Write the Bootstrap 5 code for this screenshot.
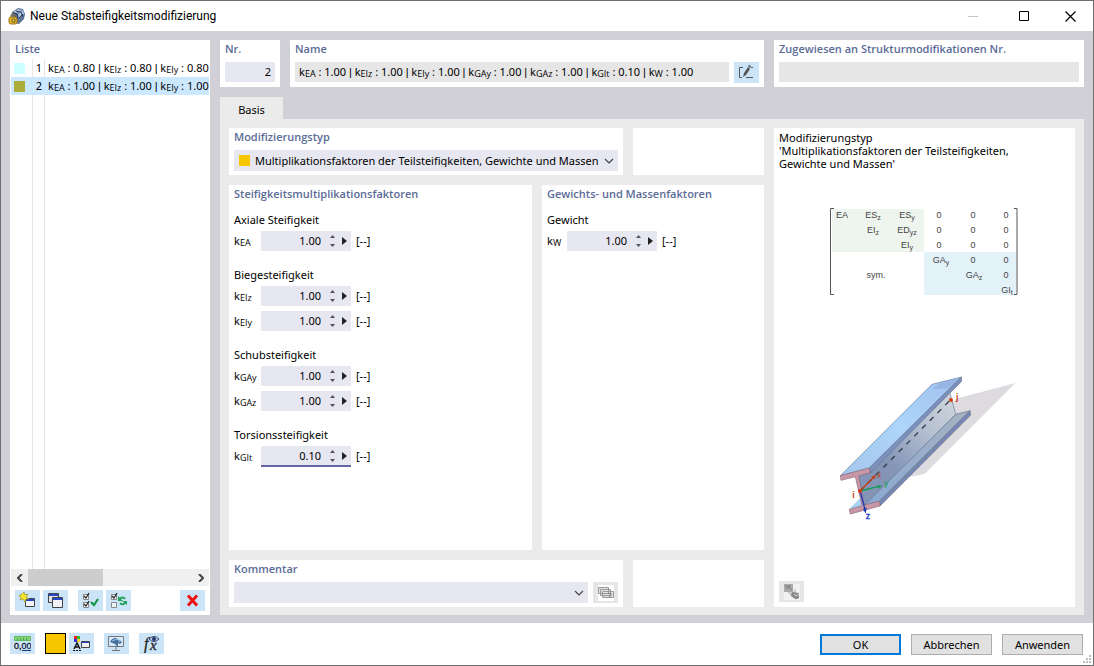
<!DOCTYPE html>
<html lang="de">
<head>
<meta charset="utf-8">
<meta name="viewport" content="width=device-width, initial-scale=1">
<title>Neue Stabsteifigkeitsmodifizierung</title>
<link href="https://cdn.jsdelivr.net/npm/bootstrap@5.3.0/dist/css/bootstrap.min.css" rel="stylesheet">
<style>
  body { font: 11px/13px "Noto Sans", "Open Sans", sans-serif; color: #000; background: #fff; border: 1px solid #707070; }
  button, input, select { font: inherit; color: inherit; border: 0; border-radius: 0; padding: 0; }
  svg { display: block; }
  .title-bar { height: 30px; padding-left: 7px; gap: 5px; }
  .title-bar h1 { font: 12px/16px Roboto, "Open Sans", sans-serif; }
  .win-btn { width: 46px; height: 30px; background: none; }
  .workspace { background: #d1d0d6; padding: 9px 9px 8px; gap: 10px; }
  .cells { gap: 10px; }
  .inline-cells { gap: 5px; }
  .pane { background: #fff; padding: 0 5px 4px; min-width: 0; }
  .pane-title { font: 600 11px/18px "Open Sans", "Noto Sans", sans-serif; height: 22px; color: #5b6b97; margin: 0; white-space: nowrap; }
  .list-pane { width: 200px; padding: 0 1px 4px; }
  .list-pane .pane-title { height: 19px; padding-left: 4px; }
  .entries { border-collapse: separate; border-spacing: 0; table-layout: fixed; width: 198px; }
  .entries td { height: 18px; padding: 0; white-space: nowrap; line-height: 18px; }
  .entries td + td { border-left: 1px solid #e6e6e6; }
  .entries td:nth-child(1) { width: 21px; padding-left: 3px; }
  .entries td:nth-child(2) { width: 12px; text-align: right; padding-right: 2px; }
  .entries td:nth-child(3) { padding-left: 3px; }
  .entries .chosen td { background: #cce8ff; border-color: #cce8ff; }
  .entries .filler td { height: auto; }
  .swatch { width: 11px; height: 11px; flex: none; }
  .sub { font: 9px/9px "Open Sans", sans-serif; position: relative; top: 1px; }
  .bar { font-family: "Liberation Sans", Arial, sans-serif; }
  .h-scroll { height: 17px; background: #f0f0f0; }
  .h-scroll button { width: 17px; background: none; }
  .thumb { width: 75px; background: #cdcdcd; }
  .list-tools { padding: 4px 4px 0; gap: 3px; }
  .tool { width: 25px; height: 21px; background: #cce4f7; display: flex; align-items: center; justify-content: center; flex: none; }
  .tool:disabled { background: #e6e6e6; }
  .gap-after { margin-right: 7px; }
  .field { height: 20px; background: #e7e7f1; min-width: 0; width: 100%; padding: 0 4px; line-height: 20px; white-space: nowrap; }
  .field.locked { background: #e6e6e6; }
  .combo { background: #e7e7f1; height: 21px; }
  .combo .swatch { margin-left: 5px; }
  .combo select { appearance: none; background: none; width: 100%; height: 21px; padding: 0 14px 0 5px; min-width: 0; }
  .combo .chevron { width: 14px; margin-left: -14px; pointer-events: none; flex: none; }
  .nr-pane { width: 60px; }
  .assign-pane { width: 310px; }
  .tab-basis { width: 63px; height: 22px; background: #ebebeb; text-align: center; margin-top: 10px; line-height: 26px; }
  .tab-page { background: #ebebeb; padding: 9px 9px 8px; }
  .side-pane { width: 131px; }
  .weight-pane { width: 222px; }
  .preview-pane { width: 301px; padding: 3px 5px 5px; }
  .preview-pane p { width: 250px; margin: 0 0 38px; }
  .beam { margin-top: 64px; }
  .group { border: 0; padding: 0; margin: 0 0 8px; min-width: 0; }
  .group legend { font-size: 11px; line-height: 22px; height: 22px; margin: 0; float: none; }
  .pane-title + .group { margin-top: 2px; }
  .factor { height: 20px; margin-bottom: 5px; line-height: 20px; }
  .factor label { width: 27px; }
  .weight-pane .factor label { width: 20px; }
  .spin { width: 90px; height: 20px; background: #e7e7f1; margin-right: 5px; }
  .spin input { width: 60px; text-align: right; background: none; height: 20px; }
  .spin.active { height: 21px; box-shadow: inset 0 -2px #6464a5; }
  .stepper { width: 11px; margin-left: 6px; padding-top: 1px; }
  .stepper button, .more { background: none; display: flex; align-items: center; justify-content: center; }
  .stepper button { height: 9px; width: 11px; }
  .more { width: 12px; height: 20px; }
  .footer-bar { padding: 10px 10px 10px 9px; gap: 10px; }
  .colour-btn { width: 21px; height: 21px; background: #f7c600; border: 1px solid #000; margin-right: -7px; }
  .dlg-btn { width: 81px; height: 21px; background: #e1e1e1; border: 1px solid #adadad; margin-top: 1px; line-height: 19px; }
  .dlg-btn.primary { border: 2px solid #0078d7; line-height: 17px; }
  .grip { position: absolute; right: 2px; bottom: 2px; }
</style>
</head>
<body class="d-flex flex-column min-vh-100 position-relative">
<svg width="0" height="0" class="position-absolute" aria-hidden="true">
  <symbol id="up" viewBox="0 0 5 3"><path d="M0 3 2.500 0 5 3z" fill="#555"/></symbol>
  <symbol id="down" viewBox="0 0 5 3"><path d="M0 0 2.500 3 5 0z" fill="#555"/></symbol>
  <symbol id="right" viewBox="0 0 5 8"><path d="M0 0 5 4 0 8z" fill="#222"/></symbol>
  <symbol id="chev" viewBox="0 0 10 6"><path d="M1 1 5 5 9 1" fill="none" stroke="#444" stroke-width="1.200"/></symbol>
</svg>

<header class="title-bar d-flex align-items-center">
  <svg width="17" height="17" viewBox="0 0 17 17" aria-hidden="true">
    <path d="M4 4 10 0l5 1 2 5-1 5-5 5-6-1-2-5z" fill="#5f7598"/>
    <path d="M5 4l5-3 4 1-5 3zM10 6l5-4 1 4-5 4z" fill="#b3c5dc"/>
    <path d="M5 5l4 1 1 5M8 3l5 1 2 5M11 10l4-4" fill="none" stroke="#263d61"/>
    <rect x="1" y="9" width="8" height="7" rx="2" fill="#e3b72c" stroke="#9a7415"/>
    <path d="M3 9V7q2-3 4 0v2M4 11h3v3H4z" fill="none" stroke="#7f662b"/>
  </svg>
  <h1 class="m-0 flex-grow-1">Neue Stabsteifigkeitsmodifizierung</h1>
  <button class="win-btn d-flex align-items-center justify-content-center me-n1" disabled aria-label="Minimieren"><svg width="10" height="1"><path d="M0 .5h10" stroke="#c4c4c4"/></svg></button>
  <div class="d-flex">
    <button class="win-btn d-flex align-items-center justify-content-center" aria-label="Maximieren"><svg width="10" height="10"><path d="M.5.5h9v9h-9z" fill="none" stroke="#000"/></svg></button>
    <button class="win-btn d-flex align-items-center justify-content-center" aria-label="Schließen"><svg width="11" height="11"><path d="M.5.5l10 10M10.500.5l-10 10" stroke="#000" stroke-width="1.200"/></svg></button>
  </div>
</header>

<main class="workspace d-flex flex-grow-1">
  <section class="pane list-pane d-flex flex-column flex-shrink-0">
    <h2 class="pane-title">Liste</h2>
    <div class="flex-grow-1 d-flex overflow-hidden">
      <table class="entries">
        <tbody>
          <tr><td><div class="swatch" style="background:#ccffff"></div></td><td>1</td><td>k<span class="sub">EA</span> : 0.80 <span class="bar">|</span> k<span class="sub">EIz</span> : 0.80 <span class="bar">|</span> k<span class="sub">EIy</span> : 0.80</td></tr>
          <tr class="chosen"><td><div class="swatch" style="background:#abac3b"></div></td><td>2</td><td>k<span class="sub">EA</span> : 1.00 <span class="bar">|</span> k<span class="sub">EIz</span> : 1.00 <span class="bar">|</span> k<span class="sub">EIy</span> : 1.00</td></tr>
          <tr class="filler"><td></td><td></td><td></td></tr>
        </tbody>
      </table>
    </div>
    <div class="h-scroll d-flex">
      <button class="d-flex align-items-center justify-content-center" aria-label="Nach links"><svg width="6" height="8"><path d="M5 0 1 4l4 4" fill="none" stroke="#444" stroke-width="2"/></svg></button>
      <div class="thumb"></div>
      <button class="ms-auto d-flex align-items-center justify-content-center" aria-label="Nach rechts"><svg width="6" height="8"><path d="M1 0 5 4 1 8" fill="none" stroke="#444" stroke-width="2"/></svg></button>
    </div>
    <div class="list-tools d-flex">
      <button class="tool" aria-label="Neu"><svg width="17" height="17">
        <path d="M6.500 6.500h9v8h-9z" fill="#f4f4f8" stroke="#444"/><path d="M7 7h8v2H7z" fill="#2648c8"/>
        <path d="M5 0l1 3 3-1-2 3 3 2-3 0-1 3-2-3-3 1 1-3-3-2 3 0z" fill="#f7e52a" stroke="#8d8420" stroke-width=".6"/></svg></button>
      <button class="tool gap-after" aria-label="Kopieren"><svg width="17" height="17">
        <path d="M1.500 1.500h10v9h-10z" fill="#e3e3e8" stroke="#444"/><path d="M2 2h9v2H2z" fill="#2648c8"/>
        <path d="M5.500 5.500h10v10h-10z" fill="#f4f4f8" stroke="#444"/><path d="M6 6h9v2H6z" fill="#2648c8"/></svg></button>
      <button class="tool" aria-label="Alle auswählen"><svg width="17" height="17">
        <path d="M1.500 2.500h5v5h-5zM1.500 10.500h5v5h-5z" fill="#fff" stroke="#888"/>
        <path d="M2 4l2 2 3-5M2 12l2 2 3-5" fill="none" stroke="#222" stroke-width="1.200"/>
        <path d="M9 10l3 3 4-6" fill="none" stroke="#149548" stroke-width="2.200"/></svg></button>
      <button class="tool" aria-label="Auswahl umkehren"><svg width="17" height="17">
        <path d="M1.500 2.500h5v5h-5zM1.500 10.500h5v5h-5z" fill="#eef4f8" stroke="#888"/>
        <path d="M2 4l2 2 3-5" fill="none" stroke="#222" stroke-width="1.200"/>
        <path d="M9 7q4-3 6 0M16 10q-3 4-6 1" fill="none" stroke="#23a45a" stroke-width="1.800"/><path d="M8 4v5h5zM17 13V9h-5z" fill="#23a45a"/></svg></button>
      <button class="tool ms-auto" aria-label="Löschen"><svg width="13" height="13"><path d="M2 1.500l9 10M11 1.500l-9 10" stroke="#ee1111" stroke-width="3"/></svg></button>
    </div>
  </section>

  <div class="d-flex flex-column flex-grow-1">
    <div class="cells d-flex">
      <section class="pane nr-pane flex-shrink-0">
        <label class="pane-title d-block" for="nr">Nr.</label>
        <input class="field text-end" id="nr" value="2">
      </section>
      <section class="pane flex-grow-1">
        <h2 class="pane-title" id="name-title">Name</h2>
        <div class="inline-cells d-flex">
          <div class="field locked flex-grow-1 overflow-hidden" role="textbox" aria-readonly="true" aria-labelledby="name-title">k<span class="sub">EA</span> : 1.00 <span class="bar">|</span> k<span class="sub">EIz</span> : 1.00 <span class="bar">|</span> k<span class="sub">EIy</span> : 1.00 <span class="bar">|</span> k<span class="sub">GAy</span> : 1.00 <span class="bar">|</span> k<span class="sub">GAz</span> : 1.00 <span class="bar">|</span> k<span class="sub">GIt</span> : 0.10 <span class="bar">|</span> k<span class="sub">W</span> : 1.00</div>
          <button class="tool" aria-label="Name bearbeiten"><svg width="17" height="15">
            <path d="M5 2.500H1.500v10H4M13 2.500h2M8 12.500h7" fill="none" stroke="#555"/>
            <path d="M5 12l1-4 4-6 2 2-4 6z" fill="#555"/><path d="M10 1l1-1 2 1-1 2z" fill="#555"/></svg></button>
        </div>
      </section>
      <section class="pane assign-pane flex-shrink-0">
        <label class="pane-title d-block" for="assigned">Zugewiesen an Strukturmodifikationen Nr.</label>
        <input class="field locked" id="assigned" readonly>
      </section>
    </div>

    <div role="tablist" class="d-flex"><button class="tab-basis" role="tab" aria-selected="true">Basis</button></div>
    <div class="tab-page cells d-flex flex-grow-1" role="tabpanel">
      <div class="cells d-flex flex-column flex-grow-1">
        <div class="cells d-flex">
          <section class="pane flex-grow-1">
            <label class="pane-title d-block" for="modtype">Modifizierungstyp</label>
            <div class="combo d-flex align-items-center">
              <span class="swatch" style="background:#f7c600"></span>
              <select id="modtype"><option>Multiplikationsfaktoren der Teilsteifigkeiten, Gewichte und Massen</option></select>
              <span class="chevron"><svg width="10" height="6"><use href="#chev"/></svg></span>
            </div>
          </section>
          <section class="pane side-pane flex-shrink-0"></section>
        </div>

        <div class="cells d-flex flex-grow-1">
          <section class="pane flex-grow-1">
            <h2 class="pane-title">Steifigkeitsmultiplikationsfaktoren</h2>
            <fieldset class="group"><legend>Axiale Steifigkeit</legend>
              <div class="factor d-flex"><label for="kea">k<span class="sub">EA</span></label><div class="spin d-flex"><input id="kea" value="1.00"><span class="stepper"><button aria-label="Erhöhen"><svg width="5" height="3"><use href="#up"/></svg></button><button aria-label="Verringern"><svg width="5" height="3"><use href="#down"/></svg></button></span><button class="more" aria-label="Mehr"><svg width="5" height="8"><use href="#right"/></svg></button></div><span>[--]</span></div>
            </fieldset>
            <fieldset class="group"><legend>Biegesteifigkeit</legend>
              <div class="factor d-flex"><label for="keiz">k<span class="sub">EIz</span></label><div class="spin d-flex"><input id="keiz" value="1.00"><span class="stepper"><button aria-label="Erhöhen"><svg width="5" height="3"><use href="#up"/></svg></button><button aria-label="Verringern"><svg width="5" height="3"><use href="#down"/></svg></button></span><button class="more" aria-label="Mehr"><svg width="5" height="8"><use href="#right"/></svg></button></div><span>[--]</span></div>
              <div class="factor d-flex"><label for="keiy">k<span class="sub">EIy</span></label><div class="spin d-flex"><input id="keiy" value="1.00"><span class="stepper"><button aria-label="Erhöhen"><svg width="5" height="3"><use href="#up"/></svg></button><button aria-label="Verringern"><svg width="5" height="3"><use href="#down"/></svg></button></span><button class="more" aria-label="Mehr"><svg width="5" height="8"><use href="#right"/></svg></button></div><span>[--]</span></div>
            </fieldset>
            <fieldset class="group"><legend>Schubsteifigkeit</legend>
              <div class="factor d-flex"><label for="kgay">k<span class="sub">GAy</span></label><div class="spin d-flex"><input id="kgay" value="1.00"><span class="stepper"><button aria-label="Erhöhen"><svg width="5" height="3"><use href="#up"/></svg></button><button aria-label="Verringern"><svg width="5" height="3"><use href="#down"/></svg></button></span><button class="more" aria-label="Mehr"><svg width="5" height="8"><use href="#right"/></svg></button></div><span>[--]</span></div>
              <div class="factor d-flex"><label for="kgaz">k<span class="sub">GAz</span></label><div class="spin d-flex"><input id="kgaz" value="1.00"><span class="stepper"><button aria-label="Erhöhen"><svg width="5" height="3"><use href="#up"/></svg></button><button aria-label="Verringern"><svg width="5" height="3"><use href="#down"/></svg></button></span><button class="more" aria-label="Mehr"><svg width="5" height="8"><use href="#right"/></svg></button></div><span>[--]</span></div>
            </fieldset>
            <fieldset class="group"><legend>Torsionssteifigkeit</legend>
              <div class="factor d-flex"><label for="kgit">k<span class="sub">GIt</span></label><div class="spin active d-flex"><input id="kgit" value="0.10"><span class="stepper"><button aria-label="Erhöhen"><svg width="5" height="3"><use href="#up"/></svg></button><button aria-label="Verringern"><svg width="5" height="3"><use href="#down"/></svg></button></span><button class="more" aria-label="Mehr"><svg width="5" height="8"><use href="#right"/></svg></button></div><span>[--]</span></div>
            </fieldset>
          </section>
          <section class="pane weight-pane flex-shrink-0">
            <h2 class="pane-title">Gewichts- und Massenfaktoren</h2>
            <fieldset class="group"><legend>Gewicht</legend>
              <div class="factor d-flex"><label for="kw">k<span class="sub">W</span></label><div class="spin d-flex"><input id="kw" value="1.00"><span class="stepper"><button aria-label="Erhöhen"><svg width="5" height="3"><use href="#up"/></svg></button><button aria-label="Verringern"><svg width="5" height="3"><use href="#down"/></svg></button></span><button class="more" aria-label="Mehr"><svg width="5" height="8"><use href="#right"/></svg></button></div><span>[--]</span></div>
            </fieldset>
          </section>
        </div>

        <div class="cells d-flex">
          <section class="pane flex-grow-1">
            <label class="pane-title d-block" for="comment">Kommentar</label>
            <div class="inline-cells d-flex">
              <div class="combo d-flex align-items-center flex-grow-1">
                <select id="comment"><option></option></select>
                <span class="chevron"><svg width="10" height="6"><use href="#chev"/></svg></span>
              </div>
              <button class="tool" disabled aria-label="Kommentare"><svg width="16" height="16">
                <path d="M0 0h16v16H0z" fill="#fff"/><g fill="#e2e2e2" stroke="#999"><path d="M.5 2.500h10v6H.5zM2.500 4.500h10v6h-10zM4.500 6.500h11v6h-11z"/></g><path d="M10 8.500h3v2l-2 1.500" fill="none" stroke="#777"/></svg></button>
            </div>
          </section>
          <section class="pane side-pane flex-shrink-0"></section>
        </div>
      </div>

      <section class="pane preview-pane flex-shrink-0 d-flex flex-column">
        <p>Modifizierungstyp<br>'Multiplikationsfaktoren der Teilsteifigkeiten, Gewichte und Massen'</p>
        <svg class="align-self-center" width="190" height="88" viewBox="0 0 190 88" font-family="Liberation Sans, Arial, sans-serif" font-size="9" fill="#444" text-anchor="middle" role="img" aria-label="Steifigkeitsmatrix">
          <path d="M2 1h92v43H2z" fill="#eef5ee"/><path d="M94 44h92v43H94z" fill="#e3f2f9"/>
          <path d="M4 .5H.5v86H4M184 .5h3v86h-3" fill="none" stroke="#555"/>
          <text x="12" y="10">EA</text><text x="43" y="10">ES<tspan font-size="7" dy="2">z</tspan></text><text x="77" y="10">ES<tspan font-size="7" dy="2">y</tspan></text>
          <text x="109" y="10">0</text><text x="143" y="10">0</text><text x="176" y="10">0</text>
          <text x="43" y="25">EI<tspan font-size="7" dy="2">z</tspan></text><text x="77" y="25">ED<tspan font-size="7" dy="2">yz</tspan></text>
          <text x="109" y="25">0</text><text x="143" y="25">0</text><text x="176" y="25">0</text>
          <text x="77" y="40">EI<tspan font-size="7" dy="2">y</tspan></text>
          <text x="109" y="40">0</text><text x="143" y="40">0</text><text x="176" y="40">0</text>
          <text x="111" y="55">GA<tspan font-size="7" dy="2">y</tspan></text><text x="143" y="55">0</text><text x="176" y="55">0</text>
          <text x="46" y="70">sym.</text><text x="144" y="70">GA<tspan font-size="7" dy="2">z</tspan></text><text x="176" y="70">0</text>
          <text x="177" y="85">GI<tspan font-size="7" dy="2">t</tspan></text>
        </svg>
        <svg class="beam align-self-center" width="210" height="170" viewBox="0 0 630 510" role="img" aria-label="Stab mit lokalen Achsen">
          <defs>
            <linearGradient id="flange" x1="0" y1="1" x2="1" y2="0"><stop offset="0" stop-color="#a5c6ea"/><stop offset=".5" stop-color="#aed5fa"/><stop offset="1" stop-color="#9fc0ee"/></linearGradient>
            <linearGradient id="web" x1="1" y1="0" x2=".35" y2=".65"><stop offset="0" stop-color="#d3d8de"/><stop offset=".5" stop-color="#b4bfd0"/><stop offset="1" stop-color="#8394b7"/></linearGradient>
            <linearGradient id="low" x1="0" y1="1" x2="1" y2="0"><stop offset="0" stop-color="#8aa9d2"/><stop offset="1" stop-color="#a6b2c0"/></linearGradient>
          </defs>
          <path d="M408 116 586 69 315 341 170 372z" fill="#dddbe0"/>
          <path d="M110 348 148 335 388 92 407 163 133 437z" fill="url(#web)" stroke="#6b7a98" stroke-width="2"/>
          <path d="M133 436 407 163 450 152 178 424z" fill="url(#low)" stroke="#66738c" stroke-width="2"/>
          <path d="M178 424 450 152 452 165 180 438z" fill="#7687b2" stroke="#66738c" stroke-width="2"/>
          <path d="M88 446 120 415 133 437z" fill="#a9d3f6"/>
          <path d="M61 347 336 73 424 51 148 324z" fill="url(#flange)" stroke="#67809f" stroke-width="2"/>
          <path d="M336 88 356 72 420 53 382 85z" fill="#91acdd" opacity=".65"/>
          <path d="M148 324 424 51 425 64 150 340z" fill="#7c90bd" stroke="#66738c" stroke-width="2"/>
          <path d="M61 347 148 324 150 338 116 348 133 435 178 424 180 438 91 462 88 448 126 437 106 350 63 361z" fill="#c898a8" stroke="#8a6878" stroke-width="2"/>
          <path d="M120 393 392 119" stroke="#353c48" stroke-width="4" stroke-dasharray="16 17"/>
          <path d="M120 393 164 349" stroke="#c83b13" stroke-width="4"/><path d="M168 345 163 358 154 350z" fill="#c83b13"/>
          <path d="M120 393 177 379" stroke="#169c51" stroke-width="4"/><path d="M187 377 173 375 175 386z" fill="#169c51"/>
          <path d="M120 393 135 448" stroke="#1837b5" stroke-width="4"/><path d="M137 461 129 446 140 443z" fill="#1837b5"/>
          <circle cx="120" cy="393" r="6" fill="#cf3c12"/><circle cx="393" cy="120" r="6" fill="#cf3c12"/>
          <g font-family="Liberation Sans, Arial, sans-serif" font-size="26">
            <text x="170" y="353" fill="#c83b13">x</text><text x="192" y="378" fill="#169c51">y</text><text x="137" y="476" fill="#1837c5" stroke="#1837c5">z</text>
            <text x="97" y="413" fill="#c83b13" font-weight="700">i</text><text x="408" y="120" fill="#c83b13" font-weight="700">j</text>
          </g>
        </svg>
        <button class="tool mt-auto" disabled aria-label="Bild exportieren"><svg width="16" height="16">
          <path d="M0 0h16v16H0z" fill="#f2f2f2"/><path d="M0 0h9v8H0z" fill="#aaa"/><path d="M1 2h6M2 5l3-2 3 3" stroke="#777" fill="none"/>
          <path d="M3 8h6l3-4v8H7z" fill="#ccc"/><path d="M8 8l7 1v4l-1 2h-3l-4-3z" fill="#888"/><path d="M10 10l2 2 3-2" fill="none" stroke="#ddd"/></svg></button>
      </section>
    </div>
  </div>
</main>

<footer class="footer-bar d-flex">
  <button class="tool" aria-label="Einheiten und Dezimalstellen"><svg width="17" height="17" font-family="Liberation Sans, Arial, sans-serif" font-size="9">
    <path d="M.5 1.500h16v4H.5z" fill="#84d67b" stroke="#65b95d"/><path d="M3.500 3v2M6.500 3v2M9.500 3v2M12.500 3v2" stroke="#4f9a48"/>
    <text x="0" y="14" fill="#111" stroke="#111" stroke-width=".3">0,<tspan fill="#173b7a">00</tspan></text><path d="M8 15.500h9" stroke="#173b7a"/></svg></button>
  <button class="colour-btn" aria-label="Farbe"></button>
  <button class="tool" aria-label="Darstellung"><svg width="17" height="17">
    <path d="M1 1h3v3H1z" fill="#e22"/><path d="M4 1h3v3H4z" fill="#3b3"/><path d="M1 4h3v3H1z" fill="#33d"/><path d="M4 4h3v3H4z" fill="#ec2"/>
    <path d="M1 14 4 8l3 6M2 12h4" fill="none" stroke="#111" stroke-width="1.500"/><path d="M0 15.500h8" stroke="#111" stroke-dasharray="2 1"/>
    <path d="M8.500 6.500h8v6h-8z" fill="#eee" stroke="#444"/><path d="M9 7h7v1H9z" fill="#2648c8"/></svg></button>
  <button class="tool" aria-label="Ansicht"><svg width="17" height="17">
    <path d="M.5 1.500h15v10H.5z" fill="#d5e9f8" stroke="#777"/><path d="M8 12v3M4 15.500h8" stroke="#777"/>
    <path d="M2 7Q4 3 8 3l6 4-2 2-2-1v4L7 9z" fill="#47719d"/><path d="M4 6l5-2 3 3" stroke="#9bc0df" fill="none"/></svg></button>
  <button class="tool" aria-label="Formel"><svg width="19" height="18">
    <text x="2" y="14" font-family="Liberation Serif, serif" font-style="italic" font-size="16" fill="#222" stroke="#222" stroke-width=".3">f</text><text x="8" y="15" font-family="Liberation Serif, serif" font-style="italic" font-size="15" fill="#222" stroke="#222" stroke-width=".3">x</text>
    <path d="M7 4q5-5 10 0-5 5-10 0z" fill="#c2d3ea" stroke="#32466c"/><circle cx="12" cy="4" r="2" fill="#243a70"/></svg></button>
  <div class="cells d-flex ms-auto">
    <button class="dlg-btn primary">OK</button>
    <button class="dlg-btn">Abbrechen</button>
    <button class="dlg-btn">Anwenden</button>
  </div>
</footer>
<svg class="grip" width="8" height="8" aria-hidden="true"><path d="M6 0h2v2H6zM3 3h2v2H3zM6 3h2v2H6zM0 6h2v2H0zM3 6h2v2H3zM6 6h2v2H6z" fill="#bdbdbd"/></svg>
<script src="https://cdn.jsdelivr.net/npm/bootstrap@5.3.0/dist/js/bootstrap.bundle.min.js"></script>
</body>
</html>
